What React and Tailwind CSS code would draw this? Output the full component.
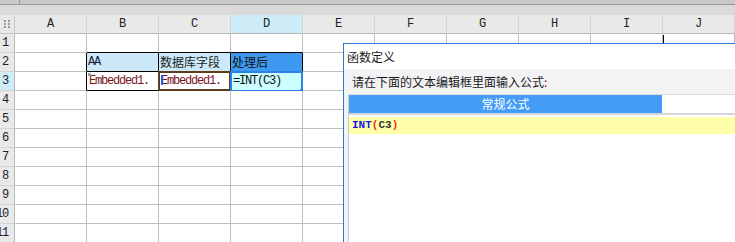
import React from "react";

const COLS = ["A", "B", "C", "D", "E", "F", "G", "H", "I", "J"];
const ROWS = [1, 2, 3, 4, 5, 6, 7, 8, 9, 10, 11];

const mono = "font-[family-name:Liberation_Mono,monospace]";
const cjk = "font-[family-name:Noto_Sans_CJK_SC,Noto_Sans,sans-serif]";

function GridDots() {
  return (
    <svg width="9" height="9" viewBox="0 0 9 9">
      {[1, 4, 7].map((y) =>
        [2, 6].map((x) => (
          <rect key={`${x}-${y}`} x={x - 1} y={y - 1} width="2" height="2" fill="#9a9a9a" />
        ))
      )}
    </svg>
  );
}

function cellBorder(r, c) {
  const black = ["B1", "C1", "D1"].includes(c + r);
  const blackRight = ["A2", "A3"].includes(c + r);
  const box = ["B", "C", "D"].includes(c) && (r === 2 || r === 3);
  if (box) return "border-r border-b border-r-black border-b-black";
  if (black) return "border-r border-b border-r-[#c0c0c0] border-b-black";
  if (blackRight) return "border-r border-b border-r-black border-b-[#c0c0c0]";
  return "border-r border-b border-[#c0c0c0]";
}

function Cell({ r, c }) {
  const key = c + r;
  let bg = "bg-white";
  let content = null;

  if (key === "B2") {
    bg = "bg-[#cde9f8]";
    content = <span className={`${mono} text-[12px] tracking-[-1.2px] text-[#1a1a40] pl-[1px]`}>AA</span>;
  }
  if (key === "C2") {
    bg = "bg-[#cde9f8]";
    content = <span className={`${cjk} text-[12px] text-[#222] pl-[1px]`}>数据库字段</span>;
  }
  if (key === "D2") {
    bg = "bg-[#3d9af0]";
    content = <span className={`${cjk} text-[12px] text-[#111] pl-[1px]`}>处理后</span>;
  }
  if (key === "B3" || key === "C3") {
    content = (
      <span className={`${mono} text-[12px] tracking-[-1.2px] text-[#7a1424] pl-[2px]`}>Embedded1.</span>
    );
  }
  if (key === "D3") {
    bg = "bg-[#ccfeff]";
    content = <span className={`${mono} text-[12px] tracking-[-1.2px] text-[#111] pl-[2px]`}>=INT(C3)</span>;
  }

  return (
    <div className={`relative w-[72px] h-[19px] flex items-center ${bg} ${cellBorder(r, c)}`}>
      {content}
      {key === "B3" && <div className="absolute left-[1px] top-[1px] w-[3px] h-[3px] bg-[#a0a0a0]" />}
      {key === "C3" && (
        <>
          <div className="absolute -left-[1px] -top-[1px] w-[73px] h-[20px] border-2 border-[#5e3c1c]" />
          <div className="absolute left-[2px] top-[3px] w-[2px] h-[10px] bg-[#2a5de0]" />
        </>
      )}
      {key === "D3" && (
        <>
          <div className="absolute -left-[1px] -top-[1px] w-[73px] h-[21px] border-2 border-[#2e7fe6]" />
          <div className="absolute -right-[3px] -bottom-[4px] w-[5px] h-[5px] bg-[#2e7fe6]" />
        </>
      )}
      {key === "J1" && <div className="absolute left-0 top-[1px] w-[1px] h-[8px] bg-black" />}
    </div>
  );
}

function FormulaDialog() {
  return (
    <div className="absolute left-[343px] top-[43px] right-0 bottom-0 border-l border-t border-[#2b78d0] flex flex-col z-10">
      <div className={`h-[25px] bg-white flex items-center pl-[3px] ${cjk} text-[12px] text-[#1a1a1a]`}>
        函数定义
      </div>
      <div className="flex-1 bg-[#f3f3f5] flex flex-col">
        <div className={`h-[25px] flex items-center pl-[8px] ${cjk} text-[12px] text-[#1a1a1a]`}>
          请在下面的文本编辑框里面输入公式<span className="text-[#7a1a4a]">:</span>
        </div>
        <div className="flex-1 ml-[4px] border-l border-[#c8c8c8] border-t border-t-[#dcdcdc] bg-white flex flex-col">
          <div className="h-[20px] flex border-b-2 border-[#d4d4da]">
            <div className={`w-[313px] bg-[#439cf5] text-white flex items-center justify-center ${cjk} text-[12px]`}>
              常规公式
            </div>
            <div className="flex-1 bg-white" />
          </div>
          <div className="mt-[2px] h-[17px] bg-[#ffffaa] flex items-center pl-[3px]">
            <span className={`${mono} text-[11px] font-bold`}>
              <span className="text-[#1a1ae6]">INT</span>
              <span className="text-[#ff2a1a]">(</span>
              <span className="text-[#333]">C3</span>
              <span className="text-[#ff2a1a]">)</span>
            </span>
          </div>
        </div>
      </div>
    </div>
  );
}

export default function App() {
  return (
    <div className="relative w-[735px] h-[242px] overflow-hidden bg-white">
      {/* top strip */}
      <div className="h-[4px] bg-[#c8c8c8] flex">
        <div className="w-[20px] border-r border-[#9a9a9a]" />
      </div>
      <div className="h-[1px] bg-[#9a9a9a]" />
      <div className="h-[10px] bg-[#dadada]" />

      {/* column headers */}
      <div className="flex">
        <div className="w-[15px] h-[19px] bg-[#e9e9e9] border-r border-b border-[#c8c8c8] flex items-center justify-center">
          <GridDots />
        </div>
        {COLS.map((c) => (
          <div
            key={c}
            className={`w-[72px] h-[19px] border-r border-b border-r-[#d4d4d4] border-b-[#b8b8b8] flex items-center justify-center ${mono} text-[12px] text-[#222] ${
              c === "D" ? "bg-[#cdecf8]" : "bg-[#e9e9e9]"
            }`}
          >
            {c}
          </div>
        ))}
      </div>

      {/* rows */}
      {ROWS.map((r) => (
        <div key={r} className="flex">
          <div
            className={`w-[15px] h-[19px] overflow-hidden border-r border-b border-r-[#b8b8b8] border-b-[#d4d4d4] flex items-center justify-end pr-[6px] ${mono} text-[12px] tracking-[-1.2px] text-[#222] ${
              r === 3 ? "bg-[#cdecf8]" : "bg-[#e9e9e9]"
            }`}
          >
            <span className="shrink-0">{r}</span>
          </div>
          {COLS.map((c) => (
            <Cell key={c} r={r} c={c} />
          ))}
        </div>
      ))}

      <FormulaDialog />
    </div>
  );
}
